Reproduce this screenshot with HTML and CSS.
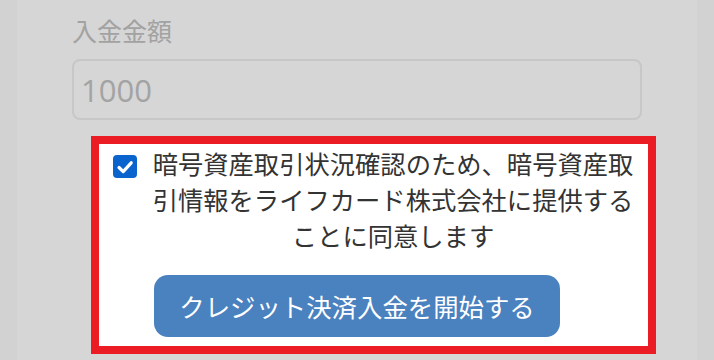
FILE: index.html
```html
<!DOCTYPE html>
<html lang="ja">
<head>
<meta charset="utf-8">
<title>入金</title>
<link rel="stylesheet" href="styles.css">
</head>
<body>
<div class="page">
  <form class="form">
    <div class="field-label">入金金額</div>
    <div class="amount-input">1000</div>
    <div class="highlight">
      <label class="agree">
        <span class="checkbox">
          <svg viewBox="0 0 24 24" width="24" height="24" aria-hidden="true">
            <path d="M6 12.5 L10.2 16.6 L18.2 7.8" fill="none" stroke="#fff" stroke-width="3.2" stroke-linecap="round" stroke-linejoin="round"/>
          </svg>
        </span>
        <span class="agree-text">暗号資産取引状況確認のため、暗号資産取引情報をライフカード株式会社に提供することに同意します</span>
      </label>
      <button type="button" class="submit">クレジット決済入金を開始する</button>
    </div>
  </form>
</div>
</body>
</html>
```

FILE: styles.css
```css
html, body {
  margin: 0;
  padding: 0;
}
body {
  background: #d2d2d2;
  font-family: "Noto Sans CJK JP", "Noto Sans", sans-serif;
  width: 714px;
  height: 360px;
  overflow: hidden;
}
.page {
  margin: 0 17px;
  background: #d6d6d6;
  height: 360px;
}
.form {
  margin: 0;
  padding: 12px 0 0 55px;
  width: 570px;
}
.field-label {
  font-size: 25px;
  line-height: 36px;
  color: #a2a2a2;
}
.amount-input {
  margin-top: 11px;
  box-sizing: border-box;
  height: 61px;
  border: 2px solid #c7c7c7;
  border-radius: 8px;
  padding-left: 7px;
  display: flex;
  align-items: center;
  font-family: "Open Sans", "Noto Sans", sans-serif;
  font-size: 31px;
  color: #a3a3a3;
}
.highlight {
  margin: 16px 0 0 19px;
  width: 565px;
  box-sizing: border-box;
  border: 8px solid #ec1c24;
  background: #ffffff;
  padding: 1px 0 9px 0;
}
.agree {
  display: flex;
  align-items: flex-start;
  padding-left: 14px;
}
.checkbox {
  flex: none;
  width: 24px;
  height: 23px;
  margin-top: 10px;
  border-radius: 4px;
  background: #0b63ce;
  display: flex;
  align-items: center;
  justify-content: center;
}
.checkbox svg {
  display: block;
}
.agree-text {
  margin-left: 14px;
  width: 484px;
  font-size: 25.3px;
  line-height: 36px;
  color: #333333;
  text-align: center;
}
.submit {
  display: block;
  margin: 22px 0 0 55px;
  width: 406px;
  height: 62px;
  border: none;
  border-radius: 14px;
  background: #4a81bf;
  color: #ffffff;
  font-family: "Noto Sans CJK JP", "Noto Sans", sans-serif;
  font-size: 25.4px;
  padding: 0;
  cursor: pointer;
}
```
